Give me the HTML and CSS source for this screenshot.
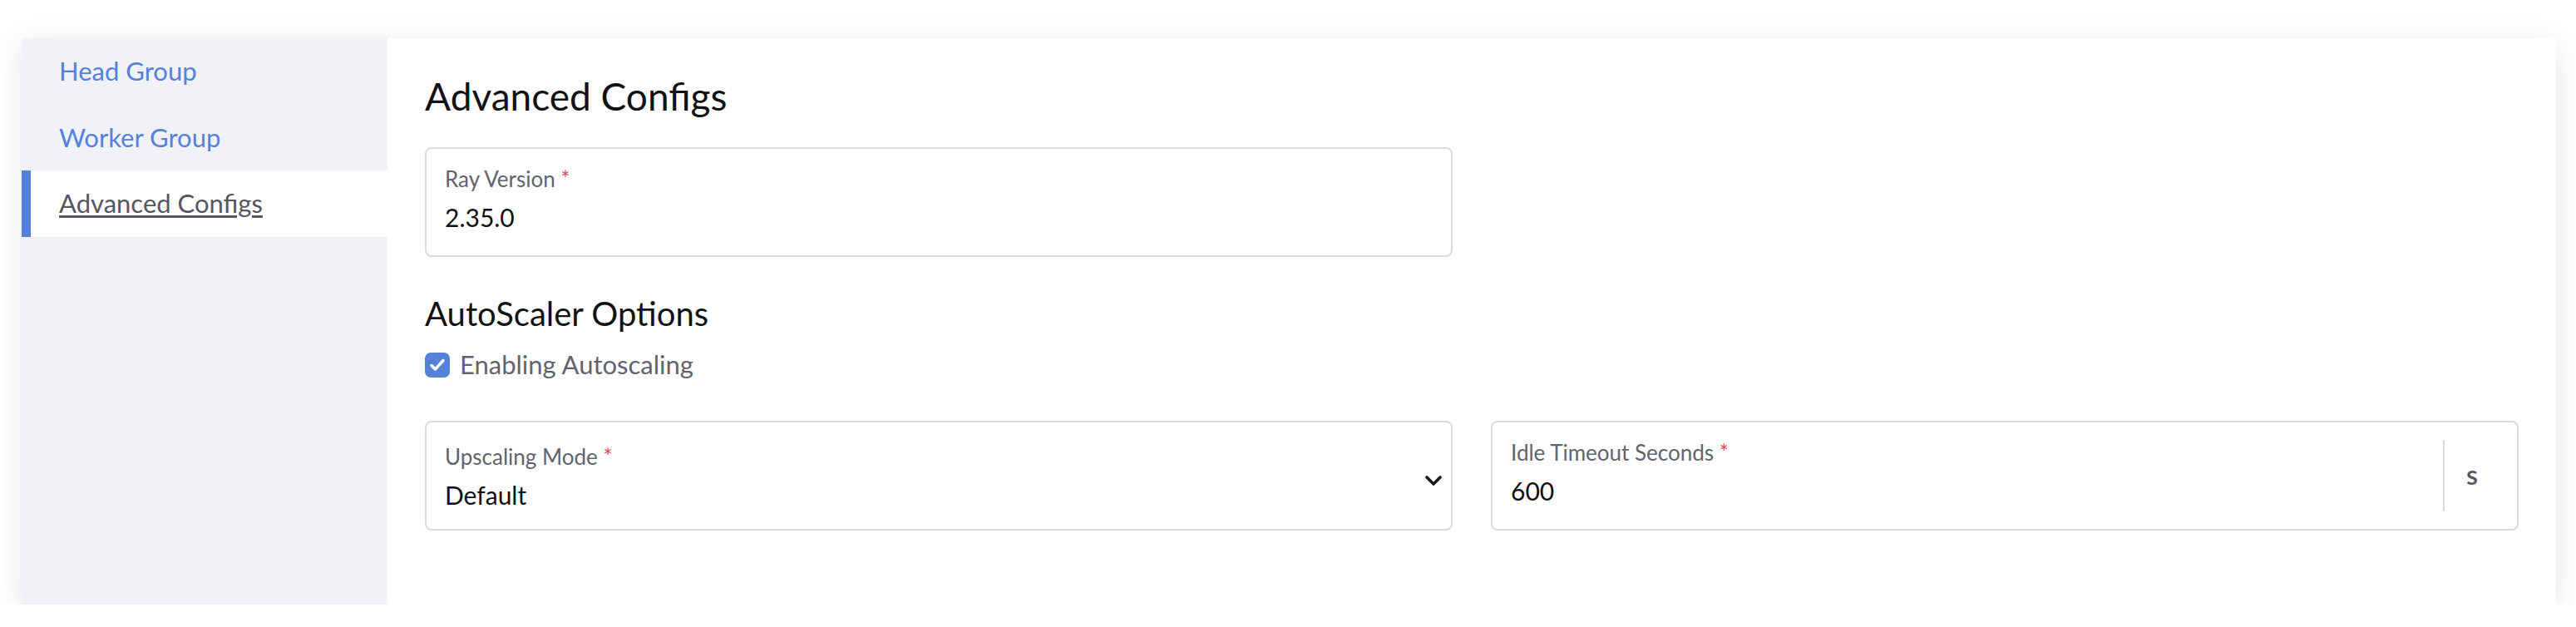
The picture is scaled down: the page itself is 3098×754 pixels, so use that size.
FILE: index.html
```html
<!DOCTYPE html>
<html lang="en">
<head>
<meta charset="utf-8">
<title>Advanced Configs</title>
<link rel="stylesheet" href="styles.css">
</head>
<body>
<div class="card">
  <nav class="sidebar">
    <a class="nav-item">Head Group</a>
    <a class="nav-item">Worker Group</a>
    <a class="nav-item active">Advanced Configs</a>
  </nav>
  <main class="content">
    <h1 class="title">Advanced Configs</h1>
    <div class="grid">
      <div class="field">
        <div class="label">Ray Version <span class="req">*</span></div>
        <div class="value">2.35.0</div>
      </div>
    </div>
    <h2 class="subtitle">AutoScaler Options</h2>
    <label class="check-row">
      <span class="checkbox">
        <svg viewBox="0 0 30 30" width="30" height="30"><path d="M8 15.5 L12.5 20 L22 9.5" fill="none" stroke="#fff" stroke-width="3.4" stroke-linecap="round" stroke-linejoin="round"/></svg>
      </span>
      <span class="check-label">Enabling Autoscaling</span>
    </label>
    <div class="grid row2">
      <div class="field select">
        <div class="field-main">
          <div class="label">Upscaling Mode <span class="req">*</span></div>
          <div class="value">Default</div>
        </div>
        <svg class="chev" viewBox="0 0 22 14" width="22" height="14"><path d="M3 3 L11 11 L19 3" fill="none" stroke="#1b1b1f" stroke-width="3.6" stroke-linecap="round" stroke-linejoin="round"/></svg>
      </div>
      <div class="field unit">
        <div class="field-main">
          <div class="label">Idle Timeout Seconds <span class="req">*</span></div>
          <div class="value">600</div>
        </div>
        <div class="suffix">s</div>
      </div>
    </div>
  </main>
</div>
</body>
</html>
```

FILE: styles.css
```css
* { box-sizing: border-box; }
html, body { margin: 0; padding: 0; background: #ffffff; }
body {
  font-family: Lato, "Noto Sans", "Liberation Sans", sans-serif;
  padding: 46px 24px 0 26px;
}
.card {
  display: flex;
  width: 3048px;
  height: 681px;
  background: #ffffff;
  box-shadow: 0 8px 34px rgba(40, 50, 110, 0.12);
}
.sidebar {
  width: 440px;
  flex: none;
  background: #f1f2f7;
  display: flex;
  flex-direction: column;
}
.nav-item {
  height: 79.5px;
  display: flex;
  align-items: center;
  padding-left: 45px;
  font-size: 31px;
  line-height: 37px;
  color: #5381db;
  text-decoration: none;
}
.nav-item.active {
  background: #ffffff;
  color: #55565f;
  text-decoration: underline;
  text-decoration-thickness: 3px;
  text-underline-offset: 3px;
  border-left: 11px solid #5582d8;
  padding-left: 34px;
}
.content {
  flex: 1;
  padding: 42px 45px 0 45px;
}
.title {
  margin: 0;
  font-size: 46px;
  line-height: 56px;
  font-weight: 400;
  color: #121214;
}
.grid {
  display: grid;
  grid-template-columns: 1fr 1fr;
  column-gap: 46px;
  margin-top: 33px;
}
.field {
  height: 132px;
  border: 2px solid #d8dae6;
  border-radius: 8px;
  padding: 21px 0 0 22px;
  background: #fff;
}
.label {
  font-size: 26px;
  line-height: 31px;
  color: #62636e;
}
.req { color: #e5484d; }
.value {
  margin-top: 12px;
  font-size: 30px;
  line-height: 36px;
  color: #111113;
}
.subtitle {
  margin: 43.5px 0 0 0;
  font-size: 40px;
  line-height: 48px;
  font-weight: 400;
  color: #121214;
}
.check-row {
  display: flex;
  align-items: center;
  gap: 12px;
  margin-top: 19.5px;
  height: 37px;
}
.checkbox {
  width: 30px;
  height: 30px;
  border-radius: 7px;
  background: #5582d8;
  display: flex;
}
.check-label {
  font-size: 31px;
  line-height: 37px;
  color: #62636e;
}
.row2 { margin-top: 48.5px; }
.field.select, .field.unit {
  display: flex;
  align-items: center;
  padding-top: 0;
}
.field-main {
  flex: 1;
  align-self: flex-start;
  padding-top: 21px;
}
.select .field-main { padding-top: 26px; }
.select .value { margin-top: 12.5px; }
.select .chev {
  margin: 12px 10px 0 0;
}
.suffix {
  align-self: stretch;
  margin: 21px 0;
  border-left: 2px solid #d8dae6;
  width: 89px;
  display: flex;
  align-items: center;
  padding-left: 26px;
  padding-bottom: 2px;
  font-size: 32px;
  font-weight: 600;
  color: #55565f;
}
```
